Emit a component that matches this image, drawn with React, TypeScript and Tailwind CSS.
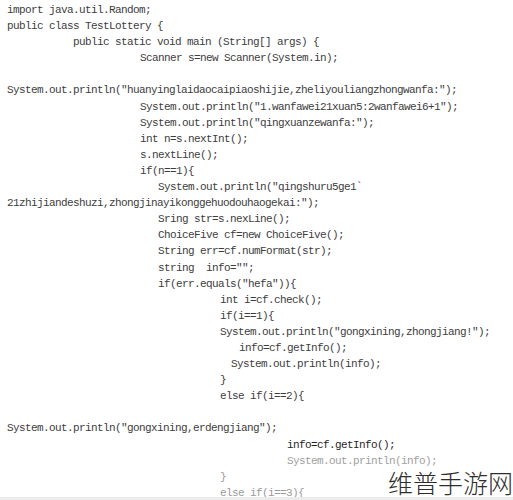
import React from "react";

type Line = { cls: string; t: string };

const lines: Line[] = [
  { cls: "pl-[7px]", t: "import java.util.Random;" },
  { cls: "pl-[7px]", t: "public class TestLottery {" },
  { cls: "pl-[73px]", t: "public static void main (String[] args) {" },
  { cls: "pl-[140px]", t: "Scanner s=new Scanner(System.in);" },
  { cls: "pl-[7px]", t: "" },
  { cls: "pl-[7px]", t: 'System.out.println("huanyinglaidaocaipiaoshijie,zheliyouliangzhongwanfa:");' },
  { cls: "pl-[140px]", t: 'System.out.println("1.wanfawei21xuan5:2wanfawei6+1");' },
  { cls: "pl-[140px]", t: 'System.out.println("qingxuanzewanfa:");' },
  { cls: "pl-[140px]", t: "int n=s.nextInt();" },
  { cls: "pl-[140px]", t: "s.nextLine();" },
  { cls: "pl-[140px]", t: "if(n==1){" },
  { cls: "pl-[158px]", t: 'System.out.println("qingshuru5ge1`' },
  { cls: "pl-[7px]", t: '21zhijiandeshuzi,zhongjinayikonggehuodouhaogekai:");' },
  { cls: "pl-[158px]", t: "Sring str=s.nexLine();" },
  { cls: "pl-[158px]", t: "ChoiceFive cf=new ChoiceFive();" },
  { cls: "pl-[158px]", t: "String err=cf.numFormat(str);" },
  { cls: "pl-[158px]", t: 'string  info="";' },
  { cls: "pl-[158px]", t: 'if(err.equals("hefa")){' },
  { cls: "pl-[220px]", t: "int i=cf.check();" },
  { cls: "pl-[220px]", t: "if(i==1){" },
  { cls: "pl-[220px]", t: 'System.out.println("gongxining,zhongjiang!");' },
  { cls: "pl-[239px]", t: "info=cf.getInfo();" },
  { cls: "pl-[231px]", t: "System.out.println(info);" },
  { cls: "pl-[220px]", t: "}" },
  { cls: "pl-[220px]", t: "else if(i==2){" },
  { cls: "pl-[7px]", t: "" },
  { cls: "pl-[7px]", t: 'System.out.println("gongxining,erdengjiang");' },
  { cls: "pl-[287px] text-[#1f1f1f]", t: "info=cf.getInfo();" },
  { cls: "pl-[287px] text-[#a0a0a0]", t: "System.out.println(info);" },
  { cls: "pl-[220px] text-[#9a9a9a]", t: "}" },
  { cls: "pl-[220px] text-[#9a9a9a]", t: "else if(i==3){" },
];

export default function App() {
  return (
    <div className="relative w-[513px] h-[500px] overflow-hidden bg-white">
      <div className="flex flex-col pt-[2px] font-['Liberation_Mono','DejaVu_Sans_Mono',monospace] text-[11px] leading-[16.1px] tracking-[-0.6px] text-[#3d3d3d] whitespace-pre">
        {lines.map((l, i) => (
          <div key={i} className={"h-[16.1px] " + l.cls}>
            {l.t}
          </div>
        ))}
      </div>
      <div className="absolute right-0 top-[469px] font-['Noto_Sans_CJK_SC',sans-serif] text-[25px] leading-[26px] font-light text-[#2e2e2e]">
        维普手游网
      </div>
      <div className="absolute left-0 right-0 bottom-0 h-[3px] bg-[#ececec]" />
    </div>
  );
}
